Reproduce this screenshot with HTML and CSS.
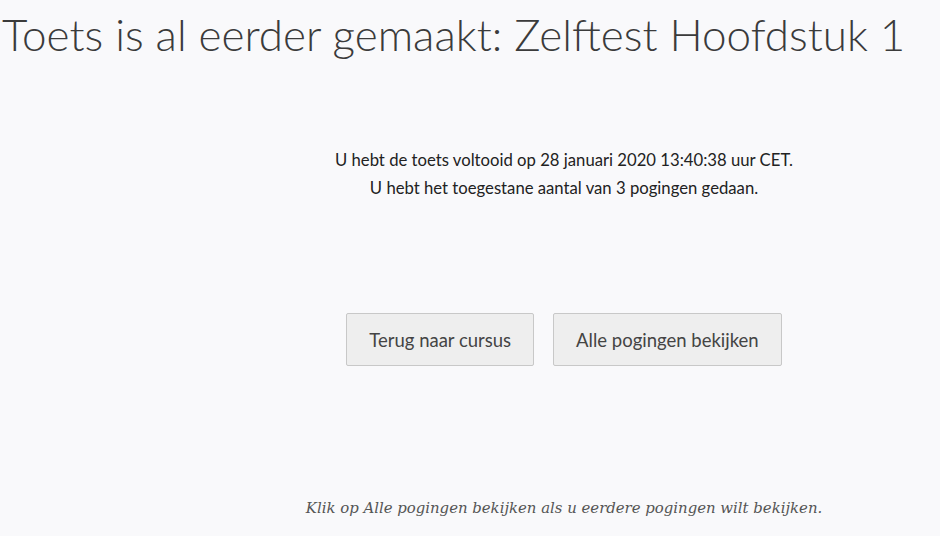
FILE: index.html
```html
<!DOCTYPE html>
<html>
<head>
  <title>Toets is al eerder gemaakt</title>
  <link rel="stylesheet" href="styles.css">
</head>
<body>
  <h1 class="page-title">Toets is al eerder gemaakt: Zelftest Hoofdstuk 1</h1>
  <div class="content">
    <div class="status">
      <p>U hebt de toets voltooid op 28 januari 2020 13:40:38 uur CET.</p>
      <p>U hebt het toegestane aantal van 3 pogingen gedaan.</p>
    </div>
    <div class="actions">
      <button type="button" class="btn">Terug naar cursus</button>
      <button type="button" class="btn">Alle pogingen bekijken</button>
    </div>
    <p class="hint">Klik op Alle pogingen bekijken als u eerdere pogingen wilt bekijken.</p>
  </div>
</body>
</html>
```
FILE: styles.css
```css
body {
  background-color: #f9f9fb;
  color: #2d3b45;
  font-family: 'Lato', sans-serif;
  margin: 0;
  padding: 0;
}

.page-title {
  font-size: 44px;
  font-weight: 300;
  color: #3b3b3b;
  margin: 0;
  padding: 8px 0 0 2px;
  line-height: 52px;
  white-space: nowrap;
}

.content {
  padding-left: 188px;
  text-align: center;
}

.status {
  margin-top: 86px;
}

.status p {
  font-size: 16.7px;
  line-height: 28px;
  margin: 0;
  color: #222;
}

.actions {
  display: flex;
  justify-content: center;
  gap: 19px;
  margin-top: 111px;
}

.btn {
  background-color: #eeeeee;
  border: 1px solid #c8c8c8;
  border-radius: 2px;
  color: #444;
  font-family: 'Lato', sans-serif;
  font-size: 18.5px;
  height: 53px;
  padding: 0 22px;
  cursor: pointer;
}

.hint {
  font-family: 'DejaVu Serif', serif;
  font-style: italic;
  font-size: 14.9px;
  color: #555;
  margin: 133px 0 0 0;
}
```
